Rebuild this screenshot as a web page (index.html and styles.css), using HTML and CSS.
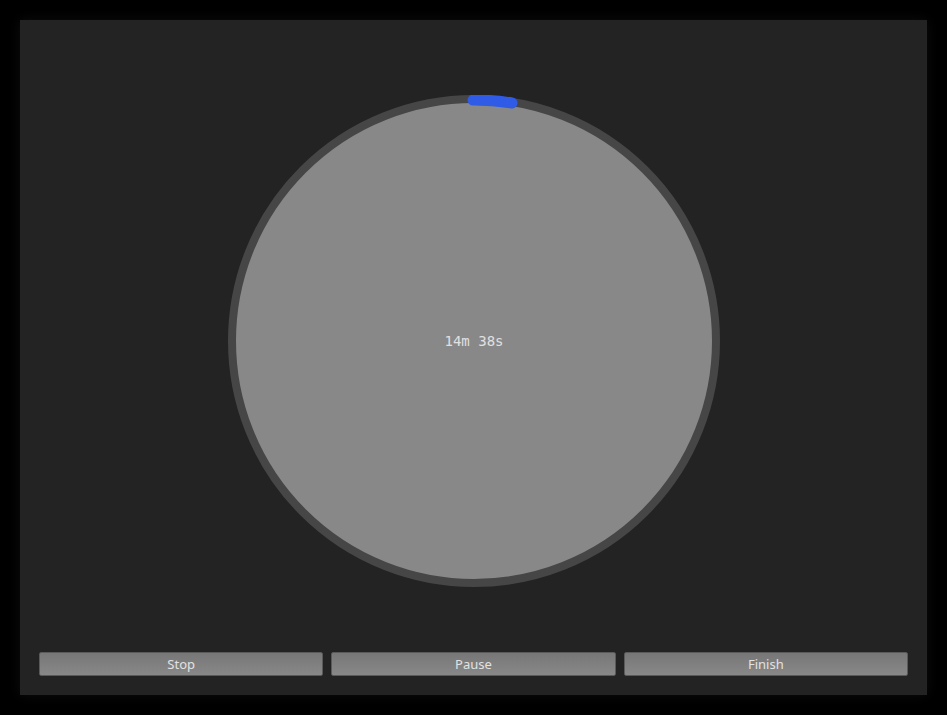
FILE: index.html
```html
<!DOCTYPE html>
<html>
<head>
<meta charset="utf-8">
<link rel="stylesheet" href="styles.css">
</head>
<body>
<div class="window">
  <div class="dial-area">
    <div class="dial">
      <svg width="492" height="492" viewBox="0 0 492 492">
        <circle cx="246" cy="246" r="242" fill="#888888" stroke="#464646" stroke-width="8"/>
        <path d="M 245 5 A 241 241 0 0 1 284 8" fill="none" stroke="#2f5be6" stroke-width="11" stroke-linecap="round"/>
      </svg>
      <div class="time">14m 38s</div>
    </div>
  </div>
  <div class="buttons">
    <button class="btn">Stop</button>
    <button class="btn">Pause</button>
    <button class="btn">Finish</button>
  </div>
</div>
</body>
</html>
```
FILE: styles.css
```css
html, body {
  margin: 0;
  padding: 0;
  background: #000;
  width: 947px;
  height: 715px;
  overflow: hidden;
}
body {
  padding: 20px 20px 20px 20px;
  box-sizing: border-box;
}
.window {
  width: 907px;
  height: 675px;
  background: #232323;
  box-shadow: 0 0 12px rgba(40,40,40,0.35);
  display: flex;
  flex-direction: column;
  box-sizing: border-box;
  padding: 0 19px 19px 19px;
}
.dial-area {
  flex: 1;
  display: flex;
  justify-content: center;
  padding-top: 75px;
}
.dial {
  position: relative;
  width: 492px;
  height: 492px;
  margin-left: 1px;
}
.dial svg {
  display: block;
}
.time {
  position: absolute;
  left: 0;
  right: 0;
  top: 238px;
  text-align: center;
  font-family: "DejaVu Sans Mono", monospace;
  font-size: 14px;
  line-height: 16px;
  color: #e0e0e0;
  padding-left: 0;
}
.buttons {
  display: flex;
  gap: 8px;
}
.btn {
  flex: 1;
  height: 24px;
  border: 1px solid #5a5a5a;
  border-radius: 2px;
  background: linear-gradient(#777777, #888888);
  color: #e2e2e2;
  font-family: "Noto Sans", "Open Sans", sans-serif;
  font-size: 13px;
  padding: 0;
  margin: 0;
}
```
